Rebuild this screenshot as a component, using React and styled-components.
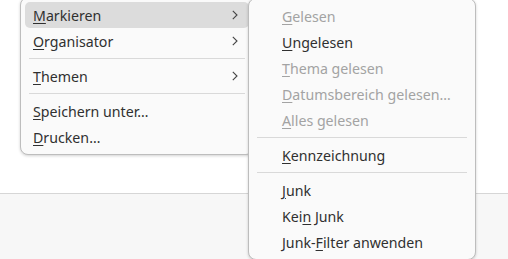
import styled, { createGlobalStyle } from 'styled-components';

const GlobalStyle = createGlobalStyle`
	html, body {
		margin: 0;
		padding: 0;
		background: #ffffff;
	}
	body {
		font-family: 'Noto Sans', 'DejaVu Sans', sans-serif;
		-webkit-font-smoothing: antialiased;
	}
`;

const Page = styled.div`
	position: relative;
	width: 508px;
	height: 259px;
	overflow: hidden;
	display: flex;
	flex-direction: column;
	background: #ffffff;
`;

const Content = styled.div`
	flex: 0 0 193px;
	border-bottom: 1px solid #d6d6d6;
`;

const StatusArea = styled.div`
	flex: 1;
	background: #f7f7f7;
`;

const Menu = styled.div`
	position: absolute;
	left: ${(p) => p.$left}px;
	top: ${(p) => p.$top}px;
	width: ${(p) => p.$width}px;
	box-sizing: border-box;
	padding: 4px;
	background: #fafafa;
	border: 1px solid #bdbdbd;
	border-radius: 8px;
	box-shadow: 0 1px 3px rgba(0, 0, 0, 0.18);
	display: flex;
	flex-direction: column;
`;

const Item = styled.div`
	height: 26px;
	display: flex;
	align-items: center;
	padding: 0 11px 0 ${(p) => p.$indent}px;
	border-radius: 5px;
	font-size: 14.2px;
	color: ${(p) => (p.$disabled ? '#a3a3a3' : '#303030')};
	background: ${(p) => (p.$active ? '#dcdcdc' : 'transparent')};
`;

const Label = styled.span`
	flex: 1;
	white-space: nowrap;
`;

const Key = styled.u`
	text-decoration-thickness: 1px;
	text-underline-offset: 2px;
`;

const Separator = styled.div`
	height: 1px;
	margin: 4px 4px;
	background: #d9d9d9;
`;

const Chevron = () => (
	<svg width="6" height="10" viewBox="0 0 6 10">
		<path d="M0.8 0.8 L5 5 L0.8 9.2" fill="none" stroke="#444" strokeWidth="1.1" />
	</svg>
);

const Entry = ({ pre, k, post, disabled, active, sub, indent = 8 }) => (
	<Item $disabled={disabled} $active={active} $indent={indent}>
		<Label>
			{pre}
			<Key>{k}</Key>
			{post}
		</Label>
		{sub && <Chevron />}
	</Item>
);

export default function App() {
	return (
		<Page>
			<GlobalStyle />
			<Content />
			<StatusArea />
			<Menu $left={20} $top={-3} $width={234}>
				<Entry k="M" post="arkieren" active sub />
				<Entry k="O" post="rganisator" sub />
				<Separator />
				<Entry k="T" post="hemen" sub />
				<Separator />
				<Entry k="S" post="peichern unter…" />
				<Entry k="D" post="rucken…" />
			</Menu>
			<Menu $left={248} $top={-2} $width={228}>
				<Entry indent={29} k="G" post="elesen" disabled />
				<Entry indent={29} k="U" post="ngelesen" />
				<Entry indent={29} k="T" post="hema gelesen" disabled />
				<Entry indent={29} k="D" post="atumsbereich gelesen…" disabled />
				<Entry indent={29} k="A" post="lles gelesen" disabled />
				<Separator />
				<Entry indent={29} k="K" post="ennzeichnung" />
				<Separator />
				<Entry indent={29} k="J" post="unk" />
				<Entry indent={29} pre="Kei" k="n" post=" Junk" />
				<Entry indent={29} pre="Junk-" k="F" post="ilter anwenden" />
			</Menu>
		</Page>
	);
}
